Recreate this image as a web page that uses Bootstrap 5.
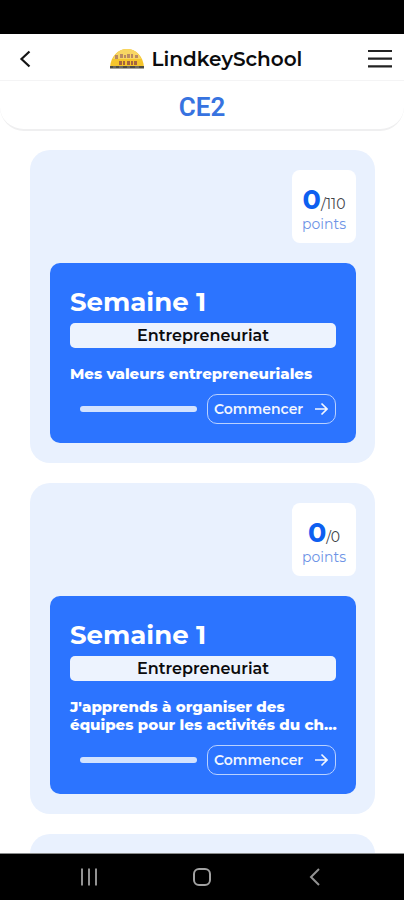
<!DOCTYPE html>
<html lang="fr">
<head>
<meta charset="utf-8">
<meta name="viewport" content="width=device-width, initial-scale=1">
<title>LindkeySchool</title>
<link href="https://cdn.jsdelivr.net/npm/bootstrap@5.3.0/dist/css/bootstrap.min.css" rel="stylesheet">
<style>
  body { font-family: Montserrat, Inter, sans-serif; color: #0b0b0d; }
  .status-strip { height: 34px; background: #000; }
  .app-bar { height: 47px; padding: 3px 12px 0 14px; border-bottom: 1px solid #f4f4f5; }
  .icon-button { padding: 0; border: 0; background: none; line-height: 1; }
  .back-button { width: 30px; }
  .brand-name { font-size: 20px; line-height: 24px; font-weight: 600; color: #0b0b0d; }
  .level-bar { height: 50px; padding-top: 4px; border-bottom: 2px solid #efeff0; border-radius: 0 0 24px 24px; }
  .level-name { font-family: Roboto, sans-serif; font-size: 26px; line-height: 32px; font-weight: 600; color: #3773e0; }
  .week-list { padding: 19px 29px 0 30px; gap: 20px; min-height: 0; }
  .week { padding: 20px 19px 20px 20px; gap: 20px; border-radius: 20px; background: #e9f1fe; }
  .week-next { min-height: 313px; }
  .score { width: 64px; height: 73px; padding-top: 15px; border-radius: 8px; }
  .score-line { font-size: 14px; line-height: 20px; color: #404247; }
  .score-line strong { font-size: 27px; line-height: 29px; font-weight: 700; color: #0d5ff0; }
  .score-unit { font-size: 14px; line-height: 20px; color: #6d93e6; }
  .panel { padding: 20px 20px 19px; border-radius: 10px; background: #2c74ff; }
  .week-title { font-size: 26px; line-height: 38px; font-weight: 700; margin-bottom: 2px; }
  .subject { font-size: 16px; line-height: 25px; font-weight: 600; border-radius: 5px; background: #edf3fe; color: #0b0b0d; }
  .lesson { font-size: 15px; line-height: 18px; font-weight: 800; margin: 17px 0 11px; }
  .track { height: 6px; margin: 0 10px; border-radius: 3px; background: #d3e3ff; }
  .start { height: 30px; width: 129px; padding: 0 7px 0 6px; font-size: 14px; line-height: 20px; font-weight: 600; color: #f2f6ff; border: 1px solid #b9d1ff; border-radius: 10px; }
  .start:hover { color: #fff; border-color: #fff; }
  .system-bar { height: 47px; padding: 0 32px; background: #000; border-top: 1px solid #8a8c8c; }
</style>
<script src="https://cdn.jsdelivr.net/npm/bootstrap@5.3.0/dist/js/bootstrap.bundle.min.js"></script>
</head>
<body class="bg-white">
<div class="d-flex flex-column vh-100 overflow-hidden">
  <div class="status-strip flex-shrink-0"></div>
  <header class="flex-shrink-0">
    <div class="app-bar d-flex align-items-center justify-content-between">
      <button type="button" class="icon-button back-button" aria-label="Retour">
        <svg class="d-block" width="24" height="24" viewBox="0 0 24 24" fill="none" stroke="#151515" stroke-width="2.2"><path d="M15.5 4.5 7.500 12l8 7.500"/></svg>
      </button>
      <a href="#" class="d-flex align-items-center gap-2 text-decoration-none">
        <svg width="34" height="20" viewBox="0 0 34 20" aria-hidden="true">
          <path d="M0 18C1 7 8 0 17 0s16 7 17 18z" fill="#f5c52c"/>
          <path d="M3 10C6 3 11 0 17 0s11 3 14 10z" fill="#f8d663"/>
          <path d="M5 6h3v4H5zM10 5h3v4h-3zM14 6h2v3h-2zM17 5h3v4h-3zM21 5h2v4h-2zM25 6h3v3h-3z" fill="#b98a62"/>
          <path d="M9 12h3v4H9zM13 12h2v4h-2zM17 12h3v4h-3zM21 12h2v4h-2zM24 12h3v4h-3z" fill="#a4643f"/>
          <path d="M0 17h34v2.500H0z" fill="#4d4b43"/>
          <path d="M3 18h3m3 0h4m4 0h3m5 0h4" stroke="#8d8878"/>
        </svg>
        <span class="brand-name">LindkeySchool</span>
      </a>
      <button type="button" class="icon-button" aria-label="Menu">
        <svg class="d-block" width="24" height="20" viewBox="0 0 24 20" fill="none" stroke="#222" stroke-width="2.200"><path d="M0 2h24M0 9.700h24M0 17.400h24"/></svg>
      </button>
    </div>
    <div class="level-bar d-flex align-items-center justify-content-center">
      <h1 class="level-name m-0">CE2</h1>
    </div>
  </header>

  <main class="week-list d-flex flex-column flex-grow-1 overflow-hidden">
    <article class="week d-flex flex-column flex-shrink-0">
      <div class="score bg-white text-center align-self-end">
        <div class="score-line"><strong>0</strong>/110</div>
        <div class="score-unit">points</div>
      </div>
      <div class="panel text-white">
        <h2 class="week-title">Semaine 1</h2>
        <div class="subject text-center">Entrepreneuriat</div>
        <p class="lesson text-nowrap">Mes valeurs entrepreneuriales</p>
        <div class="d-flex align-items-center">
          <div class="track flex-grow-1" role="progressbar" aria-label="Progression" aria-valuenow="0" aria-valuemin="0" aria-valuemax="100"></div>
          <button type="button" class="btn start d-flex align-items-center justify-content-between">Commencer
            <svg width="14" height="14" viewBox="0 0 14 14" fill="none" stroke="currentColor" stroke-width="1.600"><path d="M1 7h12M7.500 1.500 13 7l-5.500 5.500"/></svg>
          </button>
        </div>
      </div>
    </article>

    <article class="week d-flex flex-column flex-shrink-0">
      <div class="score bg-white text-center align-self-end">
        <div class="score-line"><strong>0</strong>/0</div>
        <div class="score-unit">points</div>
      </div>
      <div class="panel text-white">
        <h2 class="week-title">Semaine 1</h2>
        <div class="subject text-center">Entrepreneuriat</div>
        <p class="lesson text-nowrap">J'apprends à organiser des<br>équipes pour les activités du ch...</p>
        <div class="d-flex align-items-center">
          <div class="track flex-grow-1" role="progressbar" aria-label="Progression" aria-valuenow="0" aria-valuemin="0" aria-valuemax="100"></div>
          <button type="button" class="btn start d-flex align-items-center justify-content-between">Commencer
            <svg width="14" height="14" viewBox="0 0 14 14" fill="none" stroke="currentColor" stroke-width="1.600"><path d="M1 7h12M7.500 1.500 13 7l-5.500 5.500"/></svg>
          </button>
        </div>
      </div>
    </article>

    <article class="week week-next flex-shrink-0"></article>
  </main>

  <nav class="system-bar d-flex align-items-center justify-content-around flex-shrink-0" aria-label="Navigation système">
    <button type="button" class="icon-button" aria-label="Applications récentes">
      <svg class="d-block" width="20" height="20" viewBox="0 0 20 20" fill="none" stroke="#929292" stroke-width="2"><path d="M3 1.500v17M10 1.500v17M17 1.500v17"/></svg>
    </button>
    <button type="button" class="icon-button" aria-label="Accueil">
      <svg class="d-block" width="20" height="20" viewBox="0 0 20 20" fill="none" stroke="#a2a2a2" stroke-width="2"><rect x="2" y="2" width="16" height="16" rx="5"/></svg>
    </button>
    <button type="button" class="icon-button" aria-label="Précédent">
      <svg class="d-block" width="20" height="20" viewBox="0 0 20 20" fill="none" stroke="#929292" stroke-width="2"><path d="M14 2 6 10l8 8"/></svg>
    </button>
  </nav>
</div>
</body>
</html>
